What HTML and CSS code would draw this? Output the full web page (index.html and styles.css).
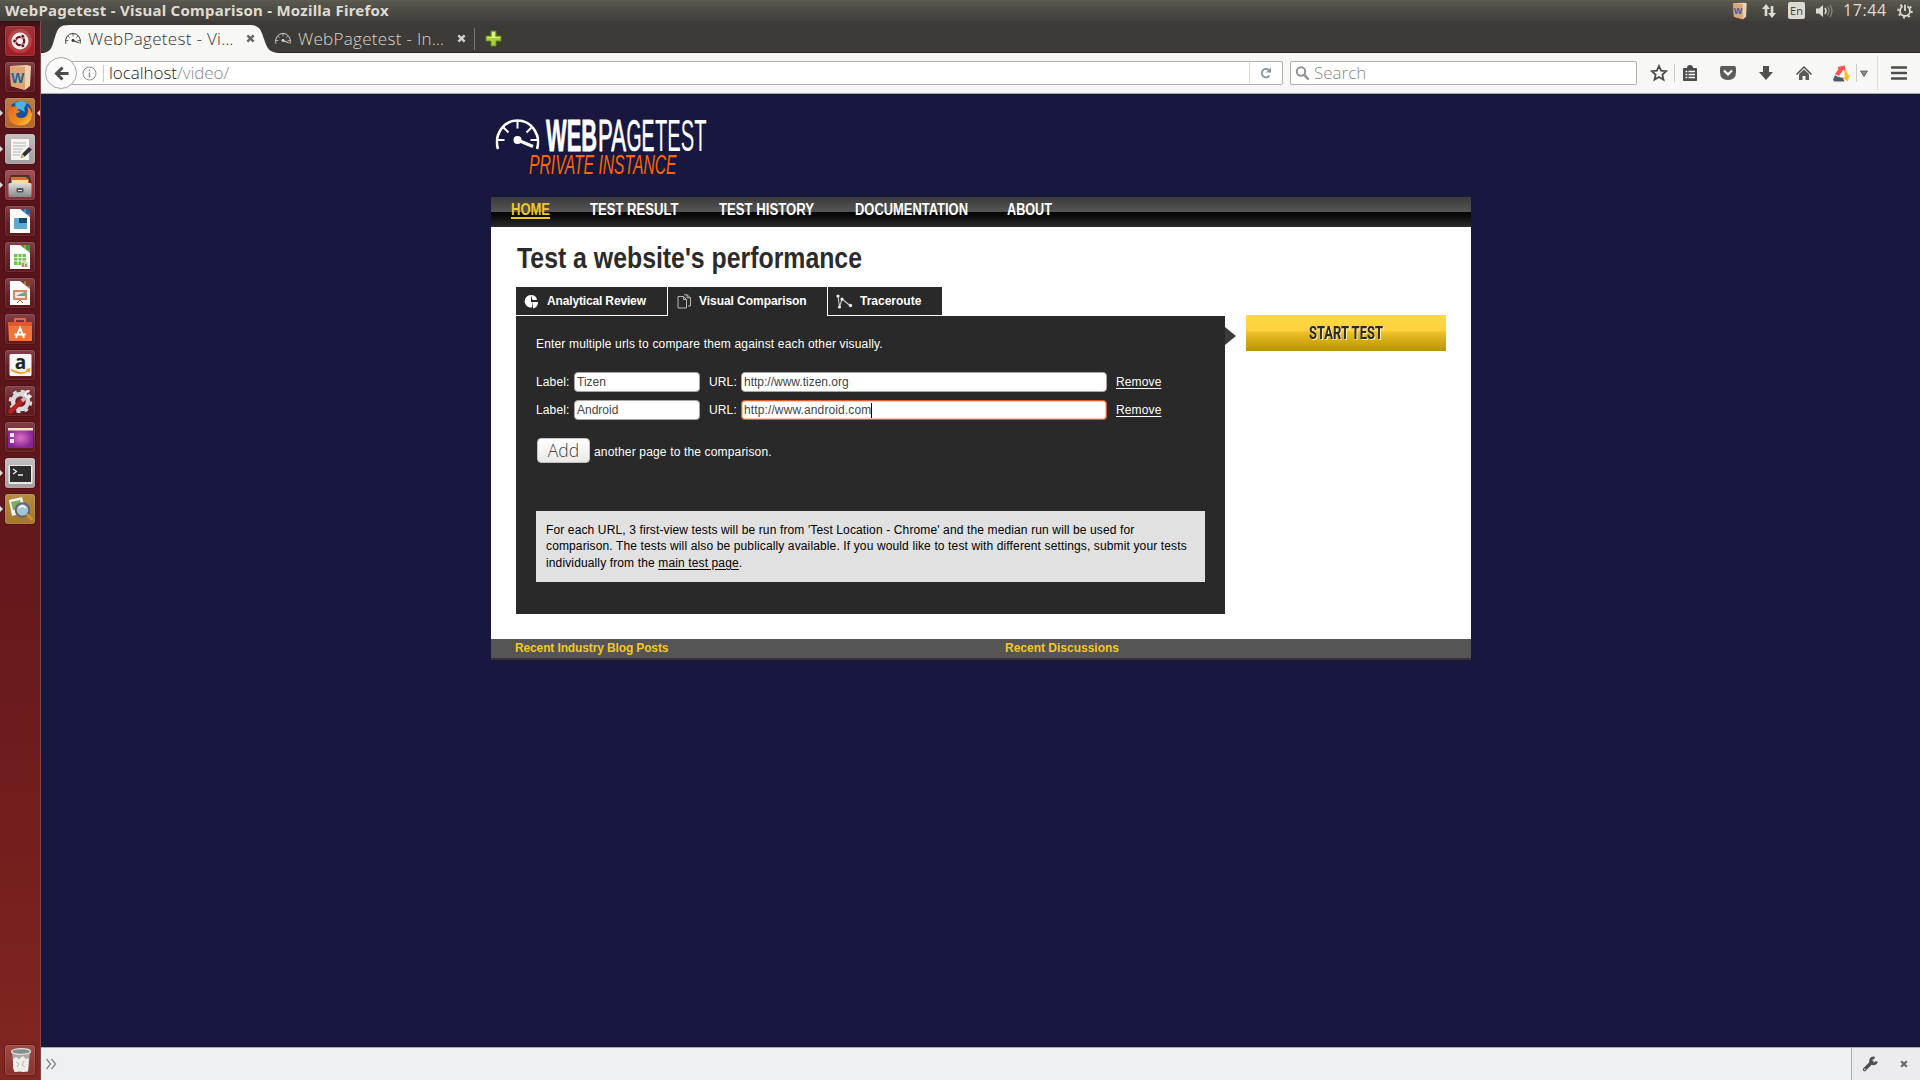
FILE: index.html
```html
<!DOCTYPE html>
<html lang="en">
<head>
<meta charset="utf-8">
<title>WebPagetest - Visual Comparison</title>
<link rel="stylesheet" href="styles.css">
</head>
<body>
<svg width="0" height="0" class="defs">
  <defs>
    <symbol id="gauge" viewBox="0 0 44 32">
      <g fill="none" stroke="currentColor">
        <path d="M2.500 30.500Q-1 20 6 10Q12 2 22 2Q32 2 38 10Q45 20 41.500 30.500" stroke-width="2.600"/>
        <path d="M22 2v8M8 9l5 5M36 9l-5 5M2 21.500h7M42 21.500h-7" stroke-width="2"/>
        <path d="M22 21.500l15.500 6.500" stroke-width="3"/>
      </g>
      <circle cx="22" cy="21.500" r="4" fill="currentColor"/>
    </symbol>
    <symbol id="sheet" viewBox="0 0 30 30">
      <path d="M5 3h15l5 6v18H5z" fill="#fff"/>
      <path d="M15 3h10v8z" fill="currentColor"/>
      <path d="M20 3v6h5" fill="none" stroke="#ddd" stroke-width=".6"/>
    </symbol>
    <symbol id="close" viewBox="0 0 10 10"><path d="M1.500 1.500l7 7M8.500 1.500l-7 7" stroke="currentColor" stroke-width="2.600" fill="none"/></symbol>
    <symbol id="wbook" viewBox="0 0 30 30">
      <path d="M5 4l17-1 4 1-1 20-5 4-14-4z" fill="#ecd2b4"/>
      <path d="M5 4l15 1v23l-14-4z" fill="#e0a372"/>
      <text x="12.500" y="20.500" text-anchor="middle" class="wletter">W</text>
    </symbol>
    <linearGradient id="gloss" x1="0" y1="0" x2="0" y2="1"><stop offset="0" stop-color="#ddd"/><stop offset="1" stop-color="#888"/></linearGradient>
    <radialGradient id="purple"><stop offset="0" stop-color="#e070c8"/><stop offset="1" stop-color="#852692"/></radialGradient>
    <linearGradient id="flame" x1="0" y1="0" x2="1" y2="1"><stop offset="0" stop-color="#e8641a"/><stop offset=".6" stop-color="#f08a1e"/><stop offset="1" stop-color="#ffd23c"/></linearGradient>
  </defs>
</svg>

<header class="panel">
  <span class="panel-title">WebPagetest - Visual Comparison - Mozilla Firefox</span>
  <div class="tray">
    <svg class="t-book" width="16" height="18" viewBox="3 2 25 27" preserveAspectRatio="none"><use href="#wbook" width="30" height="30"/></svg>
    <svg class="t-net" width="16" height="16" viewBox="0 0 16 16" fill="#dfdbd2"><path d="M5 1l4 5H6.300v7H3.700V6H1zM11 15l-4-5h2.700V3h2.600v7H15z"/></svg>
    <span class="lang">En</span>
    <svg class="t-vol" width="18" height="16" viewBox="0 0 18 16"><path d="M1 5.500h3L8 2v12L4 10.500H1z" fill="#dfdbd2"/><path d="M10 5q2 3 0 6" stroke="#dfdbd2" stroke-width="1.500" fill="none"/><path d="M12.500 3.500q3 4.500 0 9M15 2q4 6 0 12" stroke="#8b8880" stroke-width="1.300" fill="none"/></svg>
    <span class="clock">17:44</span>
    <svg class="t-gear" width="16" height="16" viewBox="0 0 16 16" fill="none" stroke="#dfdbd2"><circle cx="8" cy="8" r="5" stroke-width="1.800"/><circle cx="8" cy="8" r="6.700" stroke-width="2" stroke-dasharray="2 3.260"/><path d="M8 0v8" stroke="#48463f" stroke-width="4.500"/><path d="M8 1.500v6.500" stroke-width="1.800"/></svg>
  </div>
</header>

<div class="desktop">
  <nav class="launcher">
    <div class="tile red"><svg viewBox="0 0 30 30"><circle cx="15" cy="15" r="12" fill="#c65a5a" opacity=".55"/><circle cx="15" cy="15" r="8.500" fill="#f7eeee"/><circle cx="15" cy="15" r="4.200" fill="none" stroke="#6b1119" stroke-width="2.200"/><g fill="#6b1119" stroke="#f7eeee" stroke-width=".8"><circle cx="9.600" cy="15" r="1.900"/><circle cx="17.800" cy="10.300" r="1.900"/><circle cx="17.800" cy="19.700" r="1.900"/></g></svg></div>
    <div class="tile"><svg viewBox="0 0 30 30"><use href="#wbook"/></svg></div>
    <div class="tile orange run focus"><svg viewBox="0 0 30 30"><circle cx="15.500" cy="14.500" r="11.500" fill="#1b4f9c"/><path d="M10 5q6-4 12 0l-3 5 1 4-6-3-3 1z" fill="#4fb2e6"/><path d="M5 6l2 3q2-1 5-.5-1 2 0 3.500l3 1q-1 2-4 2.500 0 4 4.500 4.500 5 .5 7-4 1.500-4-.5-8 5 4 5 9-1 10-11.500 10.500Q4 27 3.500 16 3.500 10 5 6z" fill="url(#flame)"/></svg></div>
    <div class="tile grey run"><svg viewBox="0 0 30 30"><path d="M6 5h18v21H6z" fill="#f5f5f3"/><path d="M8 9h13M8 12h13M8 15h10M8 18h8M8 21h7" stroke="#c9c9c6" stroke-width="1.300"/><path d="M17 20l7-7 3 2.500-7 7-4.500 1.500z" fill="#302f32"/><path d="M17 20l3 2.500-4.500 1.500z" fill="#d8bd65"/><path d="M24 13l2-2 3 2-2 2.500z" fill="#d891c0"/></svg></div>
    <div class="tile rose run"><svg viewBox="0 0 30 30"><path d="M6 5h18l3 8H3z" fill="#4a3427"/><path d="M6 7h15l3 3v4H6z" fill="#e46a22"/><path d="M7 10h16v3H7z" fill="#f4dab2"/><rect x="3.500" y="13" width="23" height="14" rx="1.500" fill="url(#gloss)"/><rect x="11.500" y="18" width="7" height="4.500" rx="1" fill="#555"/><path d="M13 20.500h4" stroke="#ddd"/></svg></div>
    <div class="tile"><svg viewBox="0 0 30 30"><use href="#sheet" color="#24699b"/><path d="M9 12h13v11H9z" fill="#5ea8d1"/><path d="M14 12h8v5h-8z" fill="#164d69"/></svg></div>
    <div class="tile"><svg viewBox="0 0 30 30"><use href="#sheet" color="#3b9e32"/><path d="M9 12h12v11H9z" fill="#71bf4c"/><path d="M9 15.500h12M9 19h12M13 12v11M17 12v11" stroke="#fff" stroke-width=".9"/><path d="M16 20h7v5h-7z" fill="#dcd9b5"/><path d="M18 25v-4M21 25v-3" stroke="#c6685a" stroke-width="1.500"/></svg></div>
    <div class="tile"><svg viewBox="0 0 30 30"><use href="#sheet" color="#82461f"/><path d="M8 12h14v10H8z" fill="#d88560"/><path d="M10 14h10v6H10z" fill="#f8e8dd"/><path d="M11 18l4-2 5-2v4z" fill="#58a49b"/><path d="M12 25l3-3 3 3" stroke="#a6644a" fill="none"/></svg></div>
    <div class="tile"><svg viewBox="0 0 30 30"><path d="M10 9V5h10v4" fill="none" stroke="#df6a43" stroke-width="2"/><path d="M3 8h24v19H4z" fill="#ef7538"/><path d="M3 8h24v4H3z" fill="#e1572b"/><path d="M11 24l4-10 4 10M9.500 20.500h11" fill="none" stroke="#fff" stroke-width="2"/></svg></div>
    <div class="tile"><svg viewBox="0 0 30 30"><rect x="4.500" y="4" width="22" height="22" rx="1.500" fill="#f5f5f5"/><text x="15.500" y="18.500" text-anchor="middle" class="aletter">a</text><path d="M6 19.500q10 7 18 .5M21.500 19.500l3-.3-.8 3" fill="none" stroke="#f29a21" stroke-width="1.600"/></svg></div>
    <div class="tile"><svg viewBox="0 0 30 30"><circle cx="15.500" cy="15.500" r="7.500" fill="none" stroke="#d9d9d9" stroke-width="4.500"/><circle cx="15.500" cy="15.500" r="10.500" fill="none" stroke="#d9d9d9" stroke-width="2.500" stroke-dasharray="4 4.250"/><path d="M5.500 25.500L18 14" stroke="#b91f20" stroke-width="4.500" stroke-linecap="round"/><path d="M17 15l5-5" stroke="#bdbdbd" stroke-width="3.500"/><path d="M24.500 5.500a3 3 0 1 0 1.500 4" fill="none" stroke="#eee" stroke-width="2.500"/></svg></div>
    <div class="tile"><svg viewBox="0 0 30 30"><path d="M3 6h25v20H3z" fill="url(#purple)"/><path d="M3 6h25v2.500H3z" fill="#f0e6c5"/><path d="M5 11h4v4H5zM5 17h4v4H5z" fill="#f0dff2"/></svg></div>
    <div class="tile grey run"><svg viewBox="0 0 30 30"><rect x="3.500" y="7" width="24" height="19" rx="1" fill="#e8e8e8"/><path d="M5 8h21v16H5z" fill="#2b2c2b"/><path d="M8 11l3.500 2.500L8 16M13 17h5" fill="none" stroke="#eee" stroke-width="1.300"/></svg></div>
    <div class="tile gold run"><svg viewBox="0 0 30 30"><path d="M4 6l13-3 4 15-14 4z" fill="#f5f5ef"/><path d="M6 8l9-2 2 8-9 2z" fill="#79ad61"/><circle cx="17.500" cy="16" r="6.800" fill="#a4c3d5" stroke="#5f6871" stroke-width="2"/><path d="M14 14q3-4 7 0" fill="none" stroke="#fff" stroke-width="1.400"/><path d="M22.500 21l4 4" stroke="#d49139" stroke-width="3" stroke-linecap="round"/></svg></div>
    <div class="tile trash"><svg viewBox="0 0 30 30"><path d="M7 7h18l-2 20H9z" fill="#aaa9a5"/><ellipse cx="16" cy="6.500" rx="9.500" ry="2.800" fill="#87908b" stroke="#dce0dc" stroke-width="1.200"/><path d="M8 14l3-2 3 2 4-3 3 3 3-1-1 13-5 1-3-1-5 1-2-4z" fill="#eeede8"/><path d="M11 17l3 2-2 3M19 16l-2 4 3 2" stroke="#b7b6b1" fill="none"/></svg></div>
  </nav>

  <div class="browser">
    <div class="tabstrip">
      <svg class="tabshape" width="240" height="32" viewBox="0 0 240 32"><path d="M0 32C11 32 11 25 14 16S18 4 29 4H208C219 4 220 9 223 18S228 32 239 32z" fill="#f7f7f5"/></svg>
      <div class="tab active">
        <svg class="fav" width="16" height="13"><use href="#gauge"/></svg>
        <span class="tab-label">WebPagetest - Vi…</span>
        <svg class="x" width="9" height="9"><use href="#close"/></svg>
      </div>
      <div class="tab">
        <svg class="fav" width="16" height="13"><use href="#gauge"/></svg>
        <span class="tab-label">WebPagetest - In…</span>
        <svg class="x" width="9" height="9"><use href="#close"/></svg>
      </div>
      <svg class="plus" width="17" height="17" viewBox="0 0 17 17"><path d="M6 1h5v5h5v5h-5v5H6v-5H1V6h5z" fill="#a9cf35" stroke="#5c8a1b"/><path d="M7 2h3v5H7zM2 7h13v1H2z" fill="#d8ee83"/></svg>
    </div>
    <div class="toolbar">
      <div class="back"><svg width="15" height="15" viewBox="0 0 15 15"><path d="M8.500 1.500L2.500 7.500l6 6M3 7.500h11.500" fill="none" stroke="#4c4c4c" stroke-width="3"/></svg></div>
      <div class="urlbar">
        <svg width="15" height="15" viewBox="0 0 15 15"><circle cx="7.500" cy="7.500" r="6.500" fill="none" stroke="#8d8d8d"/><path d="M7.500 3.500v1.700M7.500 6.500v5" stroke="#8d8d8d" stroke-width="1.500"/></svg>
        <span class="url">localhost<i>/video/</i></span>
        <span class="reload"><svg width="12" height="12" viewBox="0 0 12 12"><path d="M9.500 8.500A4.200 4.200 0 1 1 8.800 3" fill="none" stroke="#8495a5" stroke-width="1.800"/><path d="M11 .5v5H6z" fill="#8495a5"/></svg></span>
      </div>
      <div class="searchbar"><svg width="15" height="15" viewBox="0 0 15 15"><circle cx="6" cy="5.500" r="4.200" fill="none" stroke="#919191" stroke-width="2"/><path d="M9 8.500l4.500 5" stroke="#919191" stroke-width="2.500"/></svg><span>Search</span></div>
      <div class="tools">
        <svg class="i-star" width="18" height="18" viewBox="0 0 18 18"><path d="M9 2l2.100 4.700 5.100.5-3.800 3.400 1.100 5L9 13l-4.500 2.600 1.100-5L1.800 7.200l5.100-.5z" fill="none" stroke="#4c4c4c" stroke-width="1.800"/></svg>
        <i class="sep"></i>
        <svg class="i-clip" width="16" height="17" viewBox="0 0 16 17"><path d="M1 4q0-1 1-1h3q0-3 3-3t3 3h3q1 0 1 1v11q0 1-1 1H2q-1 0-1-1z" fill="#4c4c4c"/><path d="M3.500 6.500h1.800M6.500 6.500H13M3.500 9.500h1.800M6.500 9.500H13M3.500 12.500h1.800M6.500 12.500H13" stroke="#fff" stroke-width="1.700"/></svg>
        <svg class="i-pocket" width="18" height="16" viewBox="0 0 18 16"><path d="M1 3q0-2 2-2h12q2 0 2 2v4q0 8-8 8T1 7z" fill="#5b5b5b"/><path d="M5 5.500l4 4 4-4" fill="none" stroke="#fff" stroke-width="2.200"/></svg>
        <svg class="i-down" width="16" height="16" viewBox="0 0 16 16"><path d="M5 1h6v6h4l-7 8-7-8h4z" fill="#4f4f4f"/></svg>
        <svg class="i-home" width="16" height="16" viewBox="0 0 16 16"><path d="M0 9l8-8 8 8-1 1-7-7-7 7z" fill="#4c4c4c"/><path d="M3 9l5-4.500L13 9v6H9.500v-4h-3v4H3z" fill="#5b5b5b"/></svg>
        <svg class="i-ddg" width="17" height="17" viewBox="0 0 17 17"><path d="M2 9l3.500-5L4.500 2 12 .5V6L10 5l-4 6z" fill="#ff5257"/><path d="M11.500 6l1-3 2.500 7 2-.5-2.500 7-5-4 2.300-.5z" fill="#ffbf16"/><path d="M0 15l2-5 2 1.500 6 1.500 1.500 3.500H1.500z" fill="#4c5968"/></svg>
        <i class="sep"></i>
        <svg class="i-drop" width="8" height="7" viewBox="0 0 8 7"><path d="M.5 1h7L4 6.500z" fill="#8c8c8c" stroke="#555" stroke-width=".8"/></svg>
        <i class="sep tall"></i>
        <svg class="i-menu" width="16" height="14" viewBox="0 0 16 14"><path d="M1 1.500h14M1 7h14M1 12.500h14" stroke="#4c4c4c" stroke-width="2.700" stroke-linecap="round"/></svg>
      </div>
    </div>

    <main class="viewport">
      <div class="site">
        <div class="logo">
          <svg width="220" height="103" viewBox="0 0 220 103">
            <use href="#gauge" x="4.500" y="24" width="44" height="33"/>
            <g class="wordmark">
              <text x="55" y="56.500" textLength="51" lengthAdjust="spacingAndGlyphs" class="heavy">WEB</text>
              <text x="107" y="56.500" textLength="28" lengthAdjust="spacingAndGlyphs" stroke="#fff" stroke-width=".9">PA</text>
              <text x="135.500" y="56.500" textLength="28" lengthAdjust="spacingAndGlyphs" stroke="#fff" stroke-width=".6">GE</text>
              <text x="164" y="56.500" textLength="51.500" lengthAdjust="spacingAndGlyphs">TEST</text>
            </g>
            <text x="38" y="80" textLength="147.500" lengthAdjust="spacingAndGlyphs" class="tagline">PRIVATE INSTANCE</text>
          </svg>
        </div>
        <ul class="menu">
          <li class="current"><svg width="39" height="30"><text x="0" y="18" textLength="39" lengthAdjust="spacingAndGlyphs">HOME</text></svg></li>
          <li><svg width="89" height="30"><text x="0" y="18" textLength="88.500" lengthAdjust="spacingAndGlyphs">TEST RESULT</text></svg></li>
          <li><svg width="95" height="30"><text x="0" y="18" textLength="95" lengthAdjust="spacingAndGlyphs">TEST HISTORY</text></svg></li>
          <li><svg width="113" height="30"><text x="1" y="18" textLength="113" lengthAdjust="spacingAndGlyphs">DOCUMENTATION</text></svg></li>
          <li><svg width="45" height="30"><text x="0" y="18" textLength="45" lengthAdjust="spacingAndGlyphs">ABOUT</text></svg></li>
        </ul>
        <div class="content">
          <h1><svg width="350" height="60"><text x="0" y="41" textLength="345" lengthAdjust="spacingAndGlyphs">Test a website's performance</text></svg></h1>
          <div class="columns">
            <div class="testbox">
              <div class="testtabs">
                <span class="tt t1"><svg width="15" height="15" viewBox="0 0 15 15"><path d="M7 1v7h1.500l-.5 5.500A6.300 6.300 0 1 1 7 1z" fill="#fff"/><path d="M7 1a6 6 0 0 1 6 5H8.500zM8.500 8H14a6 6 0 0 1-5 6.500z" fill="#fff"/></svg><b>Analytical Review</b></span>
                <span class="tt t2"><svg width="15" height="15" viewBox="0 0 15 15" fill="none" stroke="#b9b9b9"><path d="M1 2.500h5.500l3 3V14H1zM6.500 2.500v3h3M7 .8h3l3.500 3V12H11M10 .8v3h3.500"/></svg><b>Visual Comparison</b></span>
                <span class="tt t3"><svg width="17" height="15" viewBox="0 0 17 15"><path d="M2 2l1.500 11L6 5l8 6.500" fill="none" stroke="#ccc" stroke-width="1.100"/><g fill="#eee"><circle cx="2" cy="2" r="1.600"/><circle cx="3.500" cy="13" r="1.600"/><circle cx="6" cy="5" r="1.600"/><circle cx="14.500" cy="11.500" r="1.700"/></g></svg><b>Traceroute</b></span>
              </div>
              <div class="form">
                <p class="intro">Enter multiple urls to compare them against each other visually.</p>
                <div class="row"><span class="lab">Label:</span><span class="field name">Tizen</span><span class="lab url-lab">URL:</span><span class="field addr">http://www.tizen.org</span><a>Remove</a></div>
                <div class="row"><span class="lab">Label:</span><span class="field name">Android</span><span class="lab url-lab">URL:</span><span class="field addr focused">http://www.android.com<i class="caret"></i></span><a>Remove</a></div>
                <div class="addrow"><span class="button">Add</span><span class="after">another page to the comparison.</span></div>
                <div class="note"><div>For each URL, 3 first-view tests will be run from 'Test Location - Chrome' and the median run will be used for</div><div>comparison. The tests will also be publically available. If you would like to test with different settings, submit your tests</div><div>individually from the <a>main test page</a>.</div></div>
              </div>
            </div>
            <svg class="pointer" width="11" height="18" viewBox="0 0 11 18"><path d="M0 0l11 9-11 9z" fill="#3b3b3b"/></svg>
            <div class="start"><svg width="200" height="36"><text x="63" y="24" textLength="74" lengthAdjust="spacingAndGlyphs">START TEST</text></svg></div>
          </div>
        </div>
        <div class="feeds"><b>Recent Industry Blog Posts</b><b>Recent Discussions</b></div>
      </div>
    </main>

    <footer class="devbar">
      <svg class="chev" width="12" height="12" viewBox="0 0 12 12"><path d="M1.500 1l4 5-4 5M6.500 1l4 5-4 5" fill="none" stroke="#888" stroke-width="1.400"/></svg>
      <div class="devright">
        <svg width="16" height="16" viewBox="0 0 16 16"><path d="M2.500 13.500L10 6" stroke="#4c4c4c" stroke-width="3.200" stroke-linecap="round"/><path d="M12.500 2a3 3 0 1 0 2 3.500" fill="none" stroke="#4c4c4c" stroke-width="2.800"/><circle cx="2.800" cy="13.200" r=".8" fill="#eee"/></svg>
        <svg class="dx" width="8" height="8"><use href="#close"/></svg>
      </div>
    </footer>
  </div>
</div>
</body>
</html>
```
FILE: styles.css
```css
* { box-sizing: border-box; }
body { margin: 0; width: 1920px; height: 1080px; overflow: hidden; display: flex; flex-direction: column; font-family: "Liberation Sans", Arial, sans-serif; background: #3c3b37; }
svg { display: block; flex: none; }
.defs { position: absolute; }
p, h1, ul { margin: 0; padding: 0; }
.wletter { font: bold 14px "Liberation Sans", sans-serif; fill: #1766a5; }
.aletter { font: bold 19px "Open Sans", sans-serif; fill: #222; }

.panel { height: 21px; flex: none; display: flex; justify-content: space-between; align-items: center; padding-left: 5px; background: linear-gradient(#5e5c50 0, #56544b 3px, #403f3a); color: #dfdbd2; font-family: "Open Sans", sans-serif; white-space: nowrap; }
.panel-title { font: bold 15px/21px "Noto Sans", sans-serif; letter-spacing: .25px; }
.tray { display: flex; align-items: center; height: 21px; padding-right: 7px; }
.t-net { margin-left: 13px; }
.lang { width: 17px; height: 17px; margin-left: 11px; border-radius: 2px; background: #dfdbd2; color: #3c3b37; font-size: 11px; line-height: 18px; text-align: center; }
.t-vol { margin-left: 10px; }
.clock { width: 45px; margin-left: 10px; font-size: 16px; line-height: 21px; letter-spacing: .6px; }
.t-gear { margin-left: 9px; }

.desktop { flex: 1; display: flex; min-height: 0; }
.launcher { width: 41px; flex: none; display: flex; flex-direction: column; gap: 6px; padding: 5px 0 5px 5px; border-right: 1px solid #85464a; background: linear-gradient(#3f0d11 0, #56131a 8px, #5b151b 30%, #6b1b1c 65%, #832620); }
.tile { width: 30px; height: 30px; border-radius: 3px; position: relative; background: linear-gradient(#82414a, #6a2329 50%, #5c171e); box-shadow: 0 0 0 1px rgba(40,0,0,.25), inset 0 0 0 1px rgba(255,255,255,.1); }
.tile > svg { width: 30px; height: 30px; }
.red { background: linear-gradient(#9a353a, #a01c22); }
.orange { background: linear-gradient(#b97d4b, #b2672d); }
.grey { background: linear-gradient(#c4bfc0, #a49c9e); }
.rose { background: linear-gradient(#a05059, #8a2b36); }
.gold { background: linear-gradient(#b58c43, #a4762b); }
.trash { margin-top: auto; background: linear-gradient(#a04c47, #88302c); }
.run::before { content: ""; position: absolute; left: -5px; top: 12px; border: 3px solid transparent; border-left-color: #ddd; border-right: 0; }
.focus::after { content: ""; position: absolute; right: -5px; top: 12px; border: 3px solid transparent; border-right-color: #ddd; border-left: 0; }

.browser { flex: 1; display: flex; flex-direction: column; min-width: 0; }
.tabstrip { height: 32px; flex: none; position: relative; display: flex; align-items: center; padding-top: 4px; background: #3c3b37; border-bottom: 1px solid #2b2522; }
.tabshape { position: absolute; left: 0; top: 0; }
.tab { position: relative; display: flex; align-items: center; width: 200px; height: 22px; color: #dad6cd; border-right: 1px solid #77766f; }
.tab.active { width: 210px; margin-left: 24px; padding-left: 0; color: #333; border: 0; }
.tab-label { width: 156px; margin-left: 7px; font: 300 17px/20px "Open Sans", sans-serif; letter-spacing: .3px; white-space: nowrap; }
.tab .x { margin-left: 3px; color: #d5d2ca; }
.tab.active .x { color: #666; margin-left: 2px; }
.plus { margin-left: 10px; }
.toolbar { height: 41px; flex: none; display: flex; align-items: center; padding-left: 4px; background: #f7f7f5; border-bottom: 1px solid #aaa9a6; font: 300 17px "Open Sans", sans-serif; }
.back { width: 32px; height: 32px; flex: none; position: relative; z-index: 1; border: 1px solid #aaa8a4; border-radius: 50%; background: #fafafa; display: grid; place-items: center; }
.urlbar { width: 1214px; height: 24px; flex: none; margin-left: -8px; padding-left: 12px; display: flex; align-items: center; background: #fff; border: 1px solid #b2aeaa; border-radius: 2px; }
.url { margin-left: 6px; padding-left: 5px; border-left: 1px solid #ccc; height: 17px; line-height: 16px; color: #222; flex: 1; letter-spacing: -.05px; }
.url i { font-style: normal; color: #888; }
.reload { width: 33px; height: 22px; border-left: 1px solid #ddd; display: grid; place-items: center; }
.searchbar { width: 347px; height: 24px; margin-left: 7px; padding-left: 4px; display: flex; align-items: center; gap: 4px; color: #888; background: #fff; border: 1px solid #b2aeaa; border-radius: 2px; flex: none; line-height: 22px; }
.tools { display: flex; align-items: center; height: 40px; }
.tools .sep { width: 1px; height: 18px; background: #ccc; }
.tools .tall { height: 34px; background: #ddd; margin-left: 9px; }
.i-star { margin-left: 13px; margin-right: 6px; }
.i-clip { margin-left: 7px; }
.i-pocket { margin-left: 21px; }
.i-down { margin-left: 21px; }
.i-home { margin-left: 22px; }
.i-ddg { margin-left: 21px; margin-right: 6px; }
.i-drop { margin-left: 3px; }
.i-menu { margin-left: 13px; }

.viewport { flex: 1; min-height: 0; background: #181740; }
.site { width: 980px; margin: 0 auto; position: relative; left: .5px; }
.logo { color: #fff; height: 103px; }
.logo svg, .menu svg, h1 svg { overflow: visible; }
.wordmark { font: 45px "Liberation Sans", sans-serif; fill: #fff; }
.heavy { font-weight: bold; stroke: #fff; stroke-width: .8px; }
.tagline { font: italic 27px "Liberation Sans", sans-serif; fill: #ff6500; }
.menu { height: 30px; display: flex; padding-left: 20px; gap: 40px; list-style: none; background: linear-gradient(#3a3a3a, #565656 15px, #000 15px, #2b2b2b); }
.menu li { height: 30px; }
.menu text { font: bold 16px "Liberation Sans", sans-serif; fill: #fff; }
.menu .current { height: 22px; border-bottom: 2px solid #f2c822; }
.menu .current text { fill: #f2c822; }
.content { height: 412px; background: #fff; padding-left: 25px; }
h1 { height: 60px; padding-left: 1px; }
h1 text { font: bold 29.500px "Liberation Sans", sans-serif; fill: #2b2b2b; }
.columns { display: flex; align-items: flex-start; }
.testbox { width: 709px; }
.testtabs { display: flex; height: 29px; font-size: 12px; color: #fff; }
.tt { display: flex; align-items: center; background: #292929; border-bottom: 1px solid #fff; white-space: nowrap; }
.t1 { width: 151px; padding-left: 8px; gap: 8px; letter-spacing: -.15px; }
.t2 { width: 161px; padding: 0 0 1px 9px; gap: 7px; height: 29px; border-bottom: 0; border-left: 1px solid #fff; border-right: 1px solid #fff; letter-spacing: -.05px; }
.t3 { width: 114px; padding-left: 8px; gap: 7px; }
.form { height: 298px; padding: 20px; background: #292929; color: #fff; font-size: 12px; letter-spacing: .13px; white-space: nowrap; }
.intro { line-height: 16px; letter-spacing: .16px; }
.row { display: flex; align-items: center; height: 20px; margin-top: 8px; }
.intro + .row { margin-top: 20px; }
.lab { width: 38px; }
.url-lab { width: 32px; margin-left: 9px; }
.field { height: 20px; line-height: 18px; padding: 0 0 0 2px; background: #fff; color: #444; border: 1px solid #aaa5a1; border-radius: 4px; display: flex; letter-spacing: 0; }
.name { width: 126px; }
.addr { width: 366px; }
.focused { border: 1px solid #e0592a; box-shadow: inset 0 0 0 1px #f9c8b4; letter-spacing: .12px; }
.caret { width: 1px; height: 15px; margin-top: 2px; background: #000; }
.row a { margin-left: 9px; text-decoration: underline; text-underline-offset: 2px; }
.addrow { display: flex; align-items: flex-start; height: 26px; margin-top: 18px; }
.button { width: 53px; height: 25px; margin-left: 1px; border-radius: 4px; border: 1px solid #c2c0bd; background: linear-gradient(#fff, #ebe9e7); color: #444; font: 300 17.500px/22px "Open Sans", sans-serif; text-align: center; }
.after { margin-left: 4px; padding-top: 7px; letter-spacing: .16px; }
.note { height: 71px; margin-top: 47px; padding: 11px 10px; background: #e1e1e1; color: #000; line-height: 16.330px; }
.note a { text-decoration: underline; text-underline-offset: 2px; }
.pointer { margin-top: 40px; }
.start { width: 200px; height: 36px; margin: 28px 0 0 10px; background: linear-gradient(#ffda46, #ffd03c 16px, #efc02a 17px, #b99300); }
.start text { font: bold 18px Roboto, sans-serif; fill: #292929; filter: drop-shadow(1px 1px 0 #fff3b0); }
.feeds { height: 21px; display: flex; padding-left: 24px; background: #555; border-bottom: 2px solid #333; color: #f2c822; font-size: 12px; line-height: 18px; letter-spacing: -.13px; }
.feeds b { width: 490px; flex: none; overflow: hidden; }
.feeds b + b { width: 466px; letter-spacing: 0; }

.devbar { height: 33px; flex: none; display: flex; align-items: center; justify-content: space-between; border-top: 1px solid #aaa; background: #eff0f2; }
.chev { margin-left: 4px; }
.devright { width: 69px; height: 32px; display: flex; align-items: center; gap: 22px; padding-left: 10px; border-left: 1px solid #aaa; background: #ebebed; }
.dx { color: #666; }
```
